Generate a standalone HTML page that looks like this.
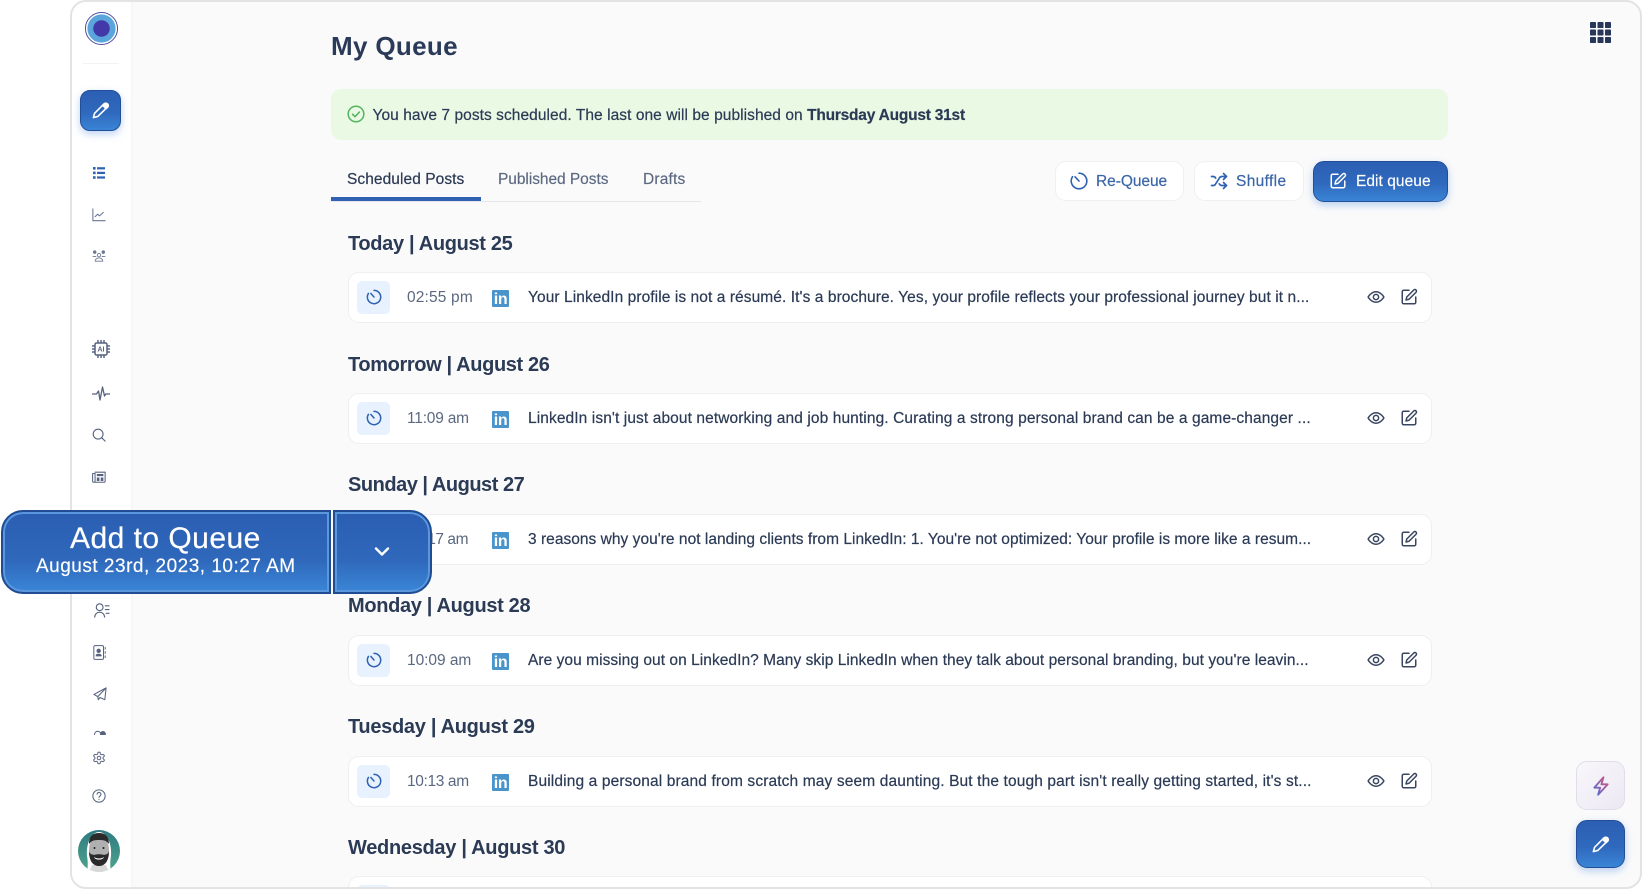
<!DOCTYPE html>
<html lang="en">
<head>
<meta charset="utf-8">
<title>My Queue</title>
<style>
html,body{margin:0;padding:0;width:1642px;height:890px;overflow:hidden;background:#fff;font-family:"Liberation Sans",sans-serif;color:#2b3a55}
body{filter:blur(.3px)}
*{box-sizing:border-box}
.a{position:absolute}
.t{position:absolute;white-space:nowrap;line-height:1}
#frame{position:absolute;left:70px;top:0;width:1572px;height:889px;background:#fafafa;border:2px solid #e3e3e3;border-radius:16px;overflow:hidden}
#side{position:absolute;left:72px;top:2px;width:59px;height:885px;background:#fff;border-radius:14px 0 0 14px;box-shadow:1px 0 1px #f4f4f4}
.ic{position:absolute;fill:none;stroke:#56627f;stroke-width:1.7;stroke-linecap:round;stroke-linejoin:round}
.blue{background:linear-gradient(180deg,#2c5fb3 0%,#2f69bd 55%,#3a85d6 100%);border:1.5px solid #224f98;box-shadow:0 3px 8px rgba(60,130,220,.35)}
.row{position:absolute;left:348px;width:1084px;height:51px;background:#fff;border:1px solid #efefef;border-radius:11px}
.box{position:absolute;left:357px;width:33px;height:33px;background:#e8f2fe;border-radius:5px}
.h{position:absolute;left:348px;font-size:20px;font-weight:bold;color:#2b3a55;white-space:nowrap;line-height:1}
.time{position:absolute;left:407px;font-size:15.5px;color:#5b6880;white-space:nowrap;line-height:1}
.txt{position:absolute;left:528px;font-size:15.5px;color:#2b3a55;white-space:nowrap;line-height:1;-webkit-text-stroke:.2px #2b3a55}
.li{position:absolute;left:492px;width:17px;height:17px;background:#4a94cc;border-radius:1px;color:#fff;font-size:16px;font-weight:bold;line-height:20px;text-align:center;overflow:hidden;letter-spacing:-.3px}
.btn{position:absolute;top:161px;height:40px;background:#fff;border:1px solid #f0f0f0;border-radius:11px}
</style>
</head>
<body>
<div id="frame"></div>
<div id="side"></div>

<!-- sidebar -->
<svg class="a" style="left:84px;top:11px" width="35" height="35" viewBox="0 0 36 36"><circle cx="18" cy="18" r="16.5" fill="#fff" stroke="#4a4ba0" stroke-width="1"/><circle cx="18" cy="18" r="14.5" fill="#5aa6dc"/><circle cx="18" cy="18" r="8.5" fill="#4338a8"/></svg>
<div class="a" style="left:83px;top:63px;width:36px;height:1px;background:#f3f3f3"></div>
<div class="a blue" style="left:80px;top:90px;width:41px;height:41px;border-radius:10px"></div>
<svg class="a" style="left:91px;top:101px" width="19" height="19" viewBox="0 0 24 24" fill="none" stroke="#fff" stroke-width="2" stroke-linejoin="round"><path d="M3 21l1.500-5.500L16 4a3 3 0 0 1 4.300 4.200L8.600 19.500z"/><path d="M17 3.500a3 3 0 0 1 4.200 4.200l-2.200 2-4-4z" fill="#fff"/></svg>

<svg class="a" style="left:92px;top:166px" width="14" height="14" viewBox="0 0 14 14" fill="#2f62b2"><rect x="1" y="1" width="2.600" height="2.600"/><rect x="1" y="5.600" width="2.600" height="2.600"/><rect x="1" y="10.200" width="2.600" height="2.600"/><rect x="5" y="1.200" width="8" height="2.200"/><rect x="5" y="5.800" width="8" height="2.200"/><rect x="5" y="10.400" width="8" height="2.200"/></svg>
<svg class="ic" style="left:92px;top:208px;stroke-width:1.200;stroke:#6a7590" width="14" height="14" viewBox="0 0 16 16"><path d="M1 1v13.500h14"/><path d="M3.500 10l3-3 2 2 4.500-4"/></svg>
<svg class="ic" style="left:92px;top:250px;stroke-width:1;stroke:#6a7590" width="14" height="12" viewBox="0 0 16 14"><circle cx="8" cy="6" r="2"/><circle cx="3" cy="2.500" r="1.500" fill="#6a7590"/><circle cx="13" cy="2.500" r="1.500" fill="#6a7590"/><path d="M1 7.500h3.500M11.500 7.500H15M3.500 13c0-5 9-5 9 0z"/></svg>

<svg class="ic" style="left:92px;top:340px;stroke-width:1.500" width="18" height="18" viewBox="0 0 18 18"><rect x="3" y="3" width="12" height="12" rx="1.500"/><path d="M6 .5v2M9 .5v2M12 .5v2M6 15.500v2M9 15.500v2M12 15.500v2M.5 6h2M.5 9h2M.5 12h2M15.500 6h2M15.500 9h2M15.500 12h2"/><text x="9" y="11.600" font-family="Liberation Sans" font-size="7" font-weight="bold" text-anchor="middle" fill="#56627f" stroke="none">AI</text></svg>
<svg class="ic" style="left:92px;top:386px;stroke-width:1.300" width="18" height="16" viewBox="0 0 18 16"><path d="M.5 8h4l2-3 1.500 9 2.500-13 2 9 1.200-2h4"/></svg>
<svg class="ic" style="left:92px;top:428px;stroke-width:1.300" width="14" height="14" viewBox="0 0 16 16"><circle cx="7" cy="7" r="5.600"/><path d="M11.200 11.200l3.800 3.800"/></svg>
<svg class="ic" style="left:92px;top:471px;stroke-width:1.200" width="14" height="12" viewBox="0 0 16 13"><path d="M3.500 1H15v10.500a1 1 0 0 1-1 1H2A1.200 1.200 0 0 1 .7 11.300V2.500h2.800V12"/><path d="M5.500 3h7.500v2.500H5.500zM5.500 7h3v4h-3zM10 7h3v4h-3z" fill="#56627f" stroke="none"/></svg>

<svg class="ic" style="left:94px;top:603px;stroke-width:1.200" width="16" height="15" viewBox="0 0 17 16"><circle cx="6" cy="4.500" r="3.600"/><path d="M.7 15c.5-7 10-7 10.600 0M12 3h4M12 7h4M13 11h3"/></svg>
<svg class="ic" style="left:93px;top:645px;stroke-width:1.200" width="13" height="15" viewBox="0 0 15 18"><rect x=".7" y=".7" width="11.600" height="16.600" rx="1.500"/><circle cx="6.500" cy="7" r="2" fill="#56627f"/><path d="M3.500 13c0-2.500 6-2.500 6 0z" fill="#56627f"/><path d="M14.300 3v2M14.300 8v2M14.300 13v2"/></svg>
<svg class="ic" style="left:93px;top:687px;stroke-width:1.200" width="14" height="14" viewBox="0 0 16 16"><path d="M15 1L1 8.500l4.500 2.500L15 1zM15 1l-1.500 13.500L8 12M5.500 11l.5 3.500 2-2.500"/></svg>
<div class="a" style="left:90px;top:729px;width:20px;height:6px;overflow:hidden"><svg class="ic" style="left:4px;top:1px;stroke-width:1.200" width="13" height="12" viewBox="0 0 16 14"><circle cx="4.500" cy="5" r="3.800"/><circle cx="11" cy="4.500" r="3" fill="#56627f"/></svg></div>
<svg class="ic" style="left:92px;top:751px;stroke-width:1.700" width="14" height="14" viewBox="0 0 24 24"><path d="M12.220 2h-.44a2 2 0 0 0-2 2v.18a2 2 0 0 1-1 1.730l-.43.25a2 2 0 0 1-2 0l-.15-.08a2 2 0 0 0-2.730.73l-.22.38a2 2 0 0 0 .73 2.730l.15.1a2 2 0 0 1 1 1.720v.51a2 2 0 0 1-1 1.740l-.15.09a2 2 0 0 0-.73 2.730l.22.38a2 2 0 0 0 2.730.73l.15-.08a2 2 0 0 1 2 0l.43.25a2 2 0 0 1 1 1.730V20a2 2 0 0 0 2 2h.44a2 2 0 0 0 2-2v-.18a2 2 0 0 1 1-1.730l.43-.25a2 2 0 0 1 2 0l.15.08a2 2 0 0 0 2.730-.73l.22-.39a2 2 0 0 0-.73-2.730l-.15-.08a2 2 0 0 1-1-1.740v-.5a2 2 0 0 1 1-1.740l.15-.09a2 2 0 0 0 .73-2.730l-.22-.38a2 2 0 0 0-2.730-.73l-.15.08a2 2 0 0 1-2 0l-.43-.25a2 2 0 0 1-1-1.730V4a2 2 0 0 0-2-2z"/><circle cx="12" cy="12" r="3"/></svg>
<svg class="ic" style="left:92px;top:789px;stroke-width:1.200" width="14" height="14" viewBox="0 0 16 16"><circle cx="8" cy="8" r="7"/><path d="M5.800 6a2.200 2.200 0 1 1 3.300 2c-.8.500-1.100.9-1.100 1.500"/><path d="M8 11.800v.2"/></svg>

<svg class="a" style="left:78px;top:830px" width="42" height="42" viewBox="0 0 42 42"><defs><clipPath id="av"><circle cx="21" cy="21" r="21"/></clipPath><linearGradient id="avg" x1="0" y1="0" x2="0" y2="1"><stop offset="0" stop-color="#2f7a80"/><stop offset="1" stop-color="#4fa58f"/></linearGradient></defs><g clip-path="url(#av)"><rect width="42" height="42" fill="url(#avg)"/><path d="M9 42c1-6 1-10 0-16-1-10 3-24 12-24s13 14 12 24c-1 6-1 10 0 16z" fill="#fff"/><path d="M11 42l3-7h14l3 7z" fill="#d8d8d8"/><ellipse cx="21" cy="20" rx="10" ry="15" fill="#b0b0b0"/><path d="M11 14c0-9 5-11 10-11s10 2 10 11c-3-4-6-4-10-4s-7 0-10 4z" fill="#2b2b2b"/><path d="M11 21c1 4 3 3 5 4 3-1 7-1 10 0 2-1 4 0 5-4 0 10-4 15-10 15s-10-5-10-15z" fill="#2a2a2a"/><path d="M16 27c3 2 7 2 10 0-1 3.500-9 3.500-10 0z" fill="#fff"/><circle cx="16.500" cy="18" r="1" fill="#222"/><circle cx="25.500" cy="18" r="1" fill="#222"/></g></svg>

<!-- header -->
<div class="t" style="left:331px;top:33px;font-size:26px;font-weight:bold;color:#2a3a58;letter-spacing:.33px">My Queue</div>
<svg class="a" style="left:1590px;top:22px" width="21" height="21" viewBox="0 0 21 21" fill="#26375a"><rect width="6" height="6" rx=".8"/><rect x="7.500" width="6" height="6" rx=".8"/><rect x="15" width="6" height="6" rx=".8"/><rect y="7.500" width="6" height="6" rx=".8"/><rect x="7.500" y="7.500" width="6" height="6" rx=".8"/><rect x="15" y="7.500" width="6" height="6" rx=".8"/><rect y="15" width="6" height="6" rx=".8"/><rect x="7.500" y="15" width="6" height="6" rx=".8"/><rect x="15" y="15" width="6" height="6" rx=".8"/></svg>

<!-- banner -->
<div class="a" style="left:331px;top:89px;width:1117px;height:51px;background:#e9f9e4;border-radius:10px"></div>
<svg class="a" style="left:347px;top:105px" width="18" height="18" viewBox="0 0 18 18" fill="none" stroke="#52b45c" stroke-width="1.500" stroke-linecap="round" stroke-linejoin="round"><circle cx="9" cy="9" r="7.800"/><path d="M5.500 9.200l2.500 2.500 4.500-4.700"/></svg>
<div class="t" style="left:372.500px;top:108px;font-size:15.5px;color:#2b3a55;letter-spacing:.06px;-webkit-text-stroke:.2px #2b3a55">You have 7 posts scheduled. The last one will be published on <b style="letter-spacing:-.22px">Thursday August 31st</b></div>

<!-- tabs -->
<div class="a" style="left:331px;top:201px;width:370px;height:1px;background:#e6e6ea"></div>
<div class="a" style="left:331px;top:197px;width:150px;height:4px;background:#2f62b2"></div>
<div class="t" style="left:347px;top:172px;font-size:15.5px;color:#2b3a55;letter-spacing:.07px;-webkit-text-stroke:.2px #2b3a55">Scheduled Posts</div>
<div class="t" style="left:498px;top:172px;font-size:15.5px;color:#5b6880;letter-spacing:-.05px;-webkit-text-stroke:.15px #5b6880">Published Posts</div>
<div class="t" style="left:643px;top:172px;font-size:15.5px;color:#5b6880;letter-spacing:.18px;-webkit-text-stroke:.15px #5b6880">Drafts</div>

<!-- buttons -->
<div class="btn" style="left:1055px;width:129px"></div>
<svg class="a" style="left:1070px;top:172px" width="18" height="18" viewBox="0 0 18 18" fill="none" stroke="#2f62b2" stroke-width="1.600" stroke-linecap="round"><path d="M9 1.200a7.800 7.800 0 1 1-6.500 3.500"/><path d="M5 4.800L9 9"/></svg>
<div class="t" style="left:1096px;top:174px;font-size:15.5px;color:#3a66a8;letter-spacing:-.05px;-webkit-text-stroke:.2px #3a66a8">Re-Queue</div>
<div class="btn" style="left:1194px;width:110px"></div>
<svg class="a" style="left:1210px;top:172px" width="18" height="18" viewBox="0 0 24 24" fill="none" stroke="#2f62b2" stroke-width="2.200" stroke-linecap="round" stroke-linejoin="round"><path d="m18 14 4 4-4 4"/><path d="m18 2 4 4-4 4"/><path d="M2 18h1.973a4 4 0 0 0 3.300-1.700l5.454-8.600a4 4 0 0 1 3.300-1.700H22"/><path d="M2 6h1.972a4 4 0 0 1 3.600 2.200"/><path d="M22 18h-6.041a4 4 0 0 1-3.300-1.800l-.359-.45"/></svg>
<div class="t" style="left:1236px;top:174px;font-size:15.5px;color:#3a66a8;letter-spacing:.35px;-webkit-text-stroke:.2px #3a66a8">Shuffle</div>
<div class="a blue" style="left:1313px;top:161px;width:135px;height:41px;border-radius:11px"></div>
<svg class="a" style="left:1329px;top:172px" width="18" height="18" viewBox="0 0 24 24" fill="none" stroke="#fff" stroke-width="2" stroke-linecap="round" stroke-linejoin="round"><path d="M12 3H5a2 2 0 0 0-2 2v14a2 2 0 0 0 2 2h14a2 2 0 0 0 2-2v-7"/><path d="M18.375 2.625a2.121 2.121 0 1 1 3 3L12 15l-4 1 1-4Z"/></svg>
<div class="t" style="left:1356px;top:174px;font-size:15.5px;color:#fff;letter-spacing:.05px;-webkit-text-stroke:.15px #fff">Edit queue</div>

<!-- day 1 -->
<div class="h" style="top:234px;letter-spacing:-.33px">Today | August 25</div>
<div class="row" style="top:272px"></div>
<div class="box" style="top:281px"></div>
<svg class="a" style="left:366px;top:289px" width="16" height="16" viewBox="0 0 18 18" fill="none" stroke="#2f62b2" stroke-width="1.700" stroke-linecap="round"><path d="M9 1.500a7.500 7.500 0 1 1-6.300 3.500"/><path d="M5.500 5L9 9"/></svg>
<div class="time" style="top:290px;letter-spacing:.16px">02:55 pm</div>
<div class="li" style="top:290px">in</div>
<div class="txt" style="top:290px;letter-spacing:.08px">Your LinkedIn profile is not a résumé. It's a brochure. Yes, your profile reflects your professional journey but it n...</div>
<svg class="a" style="left:1367px;top:288px" width="18" height="18" viewBox="0 0 24 24" fill="none" stroke="#3a4560" stroke-width="2" stroke-linecap="round" stroke-linejoin="round"><path d="M1.500 12S5.500 5 12 5s10.500 7 10.500 7-4 7-10.500 7S1.500 12 1.500 12Z"/><circle cx="12" cy="12" r="3.500"/></svg>
<svg class="a" style="left:1400px;top:288px" width="18" height="18" viewBox="0 0 24 24" fill="none" stroke="#3a4560" stroke-width="2" stroke-linecap="round" stroke-linejoin="round"><path d="M12 3H5a2 2 0 0 0-2 2v14a2 2 0 0 0 2 2h14a2 2 0 0 0 2-2v-7"/><path d="M18.375 2.625a2.121 2.121 0 1 1 3 3L12 15l-4 1 1-4Z"/></svg>

<!-- day 2 -->
<div class="h" style="top:355px;letter-spacing:-.37px">Tomorrow | August 26</div>
<div class="row" style="top:393px"></div>
<div class="box" style="top:402px"></div>
<svg class="a" style="left:366px;top:410px" width="16" height="16" viewBox="0 0 18 18" fill="none" stroke="#2f62b2" stroke-width="1.700" stroke-linecap="round"><path d="M9 1.500a7.500 7.500 0 1 1-6.300 3.500"/><path d="M5.500 5L9 9"/></svg>
<div class="time" style="top:411px;letter-spacing:-.2px">11:09 am</div>
<div class="li" style="top:411px">in</div>
<div class="txt" style="top:411px;letter-spacing:.1px">LinkedIn isn't just about networking and job hunting. Curating a strong personal brand can be a game-changer ...</div>
<svg class="a" style="left:1367px;top:409px" width="18" height="18" viewBox="0 0 24 24" fill="none" stroke="#3a4560" stroke-width="2" stroke-linecap="round" stroke-linejoin="round"><path d="M1.500 12S5.500 5 12 5s10.500 7 10.500 7-4 7-10.500 7S1.500 12 1.500 12Z"/><circle cx="12" cy="12" r="3.500"/></svg>
<svg class="a" style="left:1400px;top:409px" width="18" height="18" viewBox="0 0 24 24" fill="none" stroke="#3a4560" stroke-width="2" stroke-linecap="round" stroke-linejoin="round"><path d="M12 3H5a2 2 0 0 0-2 2v14a2 2 0 0 0 2 2h14a2 2 0 0 0 2-2v-7"/><path d="M18.375 2.625a2.121 2.121 0 1 1 3 3L12 15l-4 1 1-4Z"/></svg>

<!-- day 3 -->
<div class="h" style="top:475px;letter-spacing:-.48px">Sunday | August 27</div>
<div class="row" style="top:514px"></div>
<div class="box" style="top:523px"></div>
<div class="time" style="top:532px;letter-spacing:-.45px">10:17 am</div>
<div class="li" style="top:532px">in</div>
<div class="txt" style="top:532px;letter-spacing:.03px">3 reasons why you're not landing clients from LinkedIn: 1. You're not optimized: Your profile is more like a resum...</div>
<svg class="a" style="left:1367px;top:530px" width="18" height="18" viewBox="0 0 24 24" fill="none" stroke="#3a4560" stroke-width="2" stroke-linecap="round" stroke-linejoin="round"><path d="M1.500 12S5.500 5 12 5s10.500 7 10.500 7-4 7-10.500 7S1.500 12 1.500 12Z"/><circle cx="12" cy="12" r="3.500"/></svg>
<svg class="a" style="left:1400px;top:530px" width="18" height="18" viewBox="0 0 24 24" fill="none" stroke="#3a4560" stroke-width="2" stroke-linecap="round" stroke-linejoin="round"><path d="M12 3H5a2 2 0 0 0-2 2v14a2 2 0 0 0 2 2h14a2 2 0 0 0 2-2v-7"/><path d="M18.375 2.625a2.121 2.121 0 1 1 3 3L12 15l-4 1 1-4Z"/></svg>

<!-- day 4 -->
<div class="h" style="top:596px;letter-spacing:-.33px">Monday | August 28</div>
<div class="row" style="top:635px"></div>
<div class="box" style="top:644px"></div>
<svg class="a" style="left:366px;top:652px" width="16" height="16" viewBox="0 0 18 18" fill="none" stroke="#2f62b2" stroke-width="1.700" stroke-linecap="round"><path d="M9 1.500a7.500 7.500 0 1 1-6.300 3.500"/><path d="M5.500 5L9 9"/></svg>
<div class="time" style="top:653px;letter-spacing:-.04px">10:09 am</div>
<div class="li" style="top:653px">in</div>
<div class="txt" style="top:653px;letter-spacing:.05px">Are you missing out on LinkedIn? Many skip LinkedIn when they talk about personal branding, but you're leavin...</div>
<svg class="a" style="left:1367px;top:651px" width="18" height="18" viewBox="0 0 24 24" fill="none" stroke="#3a4560" stroke-width="2" stroke-linecap="round" stroke-linejoin="round"><path d="M1.500 12S5.500 5 12 5s10.500 7 10.500 7-4 7-10.500 7S1.500 12 1.500 12Z"/><circle cx="12" cy="12" r="3.500"/></svg>
<svg class="a" style="left:1400px;top:651px" width="18" height="18" viewBox="0 0 24 24" fill="none" stroke="#3a4560" stroke-width="2" stroke-linecap="round" stroke-linejoin="round"><path d="M12 3H5a2 2 0 0 0-2 2v14a2 2 0 0 0 2 2h14a2 2 0 0 0 2-2v-7"/><path d="M18.375 2.625a2.121 2.121 0 1 1 3 3L12 15l-4 1 1-4Z"/></svg>

<!-- day 5 -->
<div class="h" style="top:717px;letter-spacing:-.3px">Tuesday | August 29</div>
<div class="row" style="top:756px"></div>
<div class="box" style="top:765px"></div>
<svg class="a" style="left:366px;top:773px" width="16" height="16" viewBox="0 0 18 18" fill="none" stroke="#2f62b2" stroke-width="1.700" stroke-linecap="round"><path d="M9 1.500a7.500 7.500 0 1 1-6.300 3.500"/><path d="M5.500 5L9 9"/></svg>
<div class="time" style="top:774px;letter-spacing:-.36px">10:13 am</div>
<div class="li" style="top:774px">in</div>
<div class="txt" style="top:774px;letter-spacing:.13px">Building a personal brand from scratch may seem daunting. But the tough part isn't really getting started, it's st...</div>
<svg class="a" style="left:1367px;top:772px" width="18" height="18" viewBox="0 0 24 24" fill="none" stroke="#3a4560" stroke-width="2" stroke-linecap="round" stroke-linejoin="round"><path d="M1.500 12S5.500 5 12 5s10.500 7 10.500 7-4 7-10.500 7S1.500 12 1.500 12Z"/><circle cx="12" cy="12" r="3.500"/></svg>
<svg class="a" style="left:1400px;top:772px" width="18" height="18" viewBox="0 0 24 24" fill="none" stroke="#3a4560" stroke-width="2" stroke-linecap="round" stroke-linejoin="round"><path d="M12 3H5a2 2 0 0 0-2 2v14a2 2 0 0 0 2 2h14a2 2 0 0 0 2-2v-7"/><path d="M18.375 2.625a2.121 2.121 0 1 1 3 3L12 15l-4 1 1-4Z"/></svg>

<!-- day 6 -->
<div class="h" style="top:838px;letter-spacing:-.3px">Wednesday | August 30</div>
<div class="a" style="left:348px;top:876px;width:1084px;height:11px;overflow:hidden"><div class="a" style="left:0;top:0;width:1084px;height:51px;background:#fff;border:1px solid #efefef;border-radius:11px"></div><div class="a" style="left:9px;top:9px;width:33px;height:33px;background:#e8f2fe;border-radius:5px"></div></div>

<!-- add to queue -->
<div class="a" style="left:1px;top:510px;width:330px;height:84px;border-radius:22px 0 0 22px;background:linear-gradient(180deg,#2b5eb2 0%,#2f68bb 60%,#3b86d7 100%);border:2px solid #1f4c93;box-shadow:inset 0 0 0 2px #5a97dd"></div>
<div class="a" style="left:333px;top:510px;width:99px;height:84px;border-radius:0 22px 22px 0;background:linear-gradient(180deg,#2b5eb2 0%,#2f68bb 60%,#3b86d7 100%);border:2px solid #1f4c93;box-shadow:inset 0 0 0 2px #5a97dd"></div>
<div class="t" style="left:70px;top:524px;font-size:30px;color:#fff;letter-spacing:.47px;-webkit-text-stroke:.2px #fff">Add to Queue</div>
<div class="t" style="left:36px;top:557px;font-size:19px;color:#fff;letter-spacing:.5px;-webkit-text-stroke:.15px #fff">August 23rd, 2023, 10:27 AM</div>
<svg class="a" style="left:374px;top:546px" width="16" height="11" viewBox="0 0 16 11" fill="none" stroke="#fff" stroke-width="2.400" stroke-linecap="round" stroke-linejoin="round"><path d="M2 2.500l6 6 6-6"/></svg>

<!-- floating -->
<div class="a" style="left:1576px;top:761px;width:49px;height:49px;border-radius:11px;background:linear-gradient(135deg,#f8f7fb,#ece8f3);border:1px solid #e2ddea"></div>
<svg class="a" style="left:1591px;top:776px" width="20" height="20" viewBox="0 0 24 24" fill="none" stroke-width="2.200" stroke-linejoin="round"><defs><linearGradient id="bolt" x1="1" y1="0" x2="0" y2="1"><stop offset="0" stop-color="#d8567c"/><stop offset="1" stop-color="#4f6cd8"/></linearGradient></defs><path d="M15 1.500L4 14h7l-2.500 8.500L20 10h-7.500z" stroke="url(#bolt)"/></svg>
<div class="a blue" style="left:1576px;top:820px;width:49px;height:48px;border-radius:11px"></div>
<svg class="a" style="left:1591px;top:835px" width="19" height="19" viewBox="0 0 24 24" fill="none" stroke="#fff" stroke-width="2" stroke-linejoin="round"><path d="M3 21l1.500-5.500L16 4a3 3 0 0 1 4.300 4.200L8.600 19.500z"/><path d="M17 3.500a3 3 0 0 1 4.200 4.200l-2.200 2-4-4z" fill="#fff"/></svg>
</body>
</html>
